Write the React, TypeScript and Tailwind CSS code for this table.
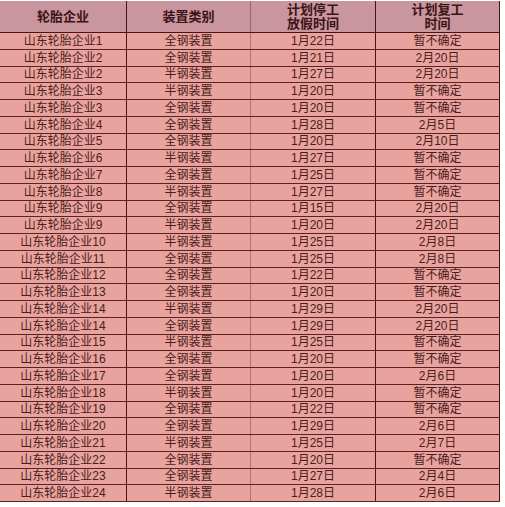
const rows: [string, string, string, string][] = [
  ["山东轮胎企业1", "全钢装置", "1月22日", "暂不确定"],
  ["山东轮胎企业2", "全钢装置", "1月21日", "2月20日"],
  ["山东轮胎企业2", "半钢装置", "1月27日", "2月20日"],
  ["山东轮胎企业3", "半钢装置", "1月20日", "暂不确定"],
  ["山东轮胎企业3", "全钢装置", "1月20日", "暂不确定"],
  ["山东轮胎企业4", "全钢装置", "1月28日", "2月5日"],
  ["山东轮胎企业5", "全钢装置", "1月20日", "2月10日"],
  ["山东轮胎企业6", "半钢装置", "1月27日", "暂不确定"],
  ["山东轮胎企业7", "全钢装置", "1月25日", "暂不确定"],
  ["山东轮胎企业8", "半钢装置", "1月27日", "暂不确定"],
  ["山东轮胎企业9", "全钢装置", "1月15日", "2月20日"],
  ["山东轮胎企业9", "半钢装置", "1月20日", "2月20日"],
  ["山东轮胎企业10", "半钢装置", "1月25日", "2月8日"],
  ["山东轮胎企业11", "全钢装置", "1月25日", "2月8日"],
  ["山东轮胎企业12", "全钢装置", "1月22日", "暂不确定"],
  ["山东轮胎企业13", "全钢装置", "1月20日", "暂不确定"],
  ["山东轮胎企业14", "半钢装置", "1月29日", "2月20日"],
  ["山东轮胎企业14", "全钢装置", "1月29日", "2月20日"],
  ["山东轮胎企业15", "半钢装置", "1月25日", "暂不确定"],
  ["山东轮胎企业16", "全钢装置", "1月20日", "暂不确定"],
  ["山东轮胎企业17", "全钢装置", "1月20日", "2月6日"],
  ["山东轮胎企业18", "半钢装置", "1月20日", "暂不确定"],
  ["山东轮胎企业19", "全钢装置", "1月22日", "暂不确定"],
  ["山东轮胎企业20", "全钢装置", "1月29日", "2月6日"],
  ["山东轮胎企业21", "半钢装置", "1月25日", "2月7日"],
  ["山东轮胎企业22", "全钢装置", "1月20日", "暂不确定"],
  ["山东轮胎企业23", "全钢装置", "1月27日", "2月4日"],
  ["山东轮胎企业24", "半钢装置", "1月28日", "2月6日"],
]

const font = { fontFamily: '"Liberation Sans", "Noto Sans CJK SC", sans-serif' }

export default function App() {
  return (
    <div className="h-[507px] w-[505px] bg-white pt-[1px]" style={font}>
      <div className="w-[500px]">
        {/* header */}
        <div className="grid h-[32px] grid-cols-[127px_124px_125px_124px] border-b border-[#4a1414] bg-[#c9959f] text-[13px] font-bold leading-[14px] text-[#3a1414]">
          <div className="flex items-center justify-center border-r border-[#4a1414]">轮胎企业</div>
          <div className="flex items-center justify-center border-r border-[#9a6270]">装置类别</div>
          <div className="flex flex-col items-center justify-center border-r border-[#4a1414]">
            <span>计划停工</span>
            <span>放假时间</span>
          </div>
          <div className="flex flex-col items-center justify-center border-r border-[#4a1414]">
            <span>计划复工</span>
            <span>时间</span>
          </div>
        </div>
        {/* body */}
        {rows.map((r, i) => (
          <div
            key={i}
            className="grid h-[16.75px] grid-cols-[127px_124px_125px_124px] border-b border-[#5a2222] bg-[#e9a39e] text-[12px] leading-none text-[#4a1c1c]"
          >
            <div className="flex items-center justify-center border-r border-[#4a1414]">{r[0]}</div>
            <div className="flex items-center justify-center border-r border-[#b87078]">{r[1]}</div>
            <div className="flex items-center justify-center border-r border-[#4a1414]">{r[2]}</div>
            <div className="flex items-center justify-center border-r border-[#4a1414]">{r[3]}</div>
          </div>
        ))}
      </div>
    </div>
  )
}
